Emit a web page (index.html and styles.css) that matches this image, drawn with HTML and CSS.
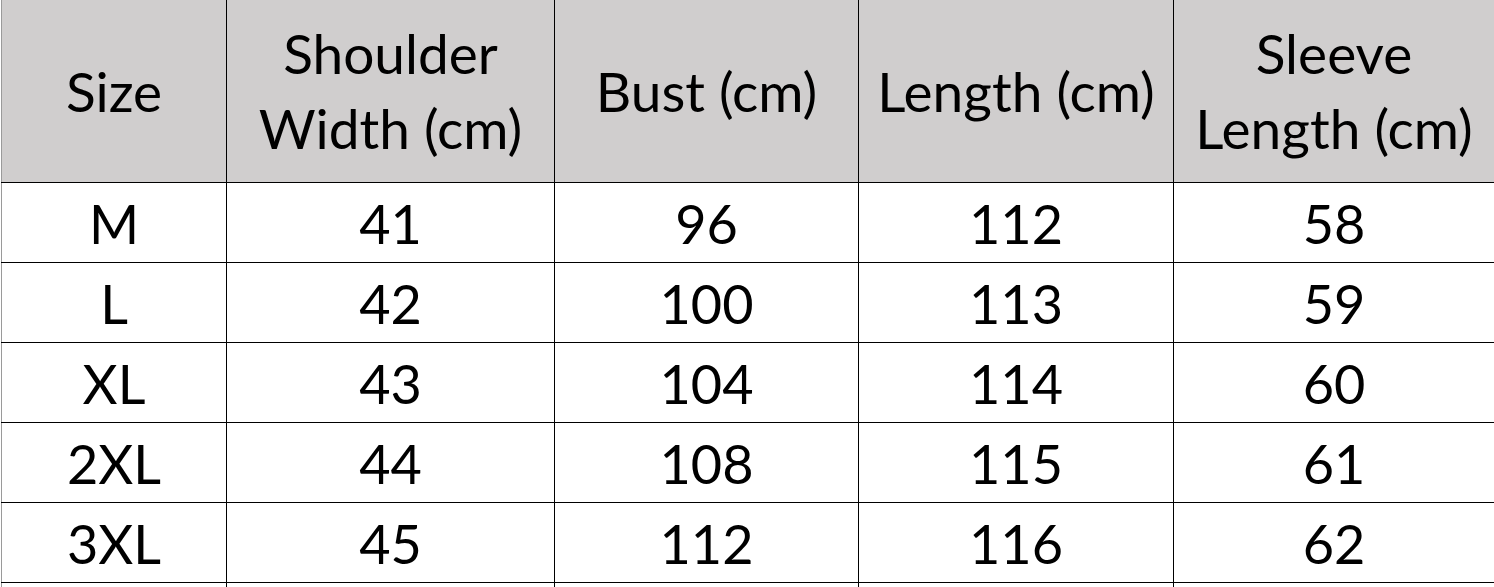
FILE: index.html
```html
<!DOCTYPE html>
<html>
<head>
<meta charset="utf-8">
<link rel="stylesheet" href="styles.css">
</head>
<body>
<table class="size-table">
  <colgroup>
    <col class="c1"><col class="c2"><col class="c3"><col class="c4"><col class="c5">
  </colgroup>
  <thead>
    <tr>
      <th>Size</th>
      <th>Shoulder<br>Width (cm)</th>
      <th>Bust (cm)</th>
      <th>Length (cm)</th>
      <th>Sleeve<br>Length (cm)</th>
    </tr>
  </thead>
  <tbody>
    <tr><td>M</td><td>41</td><td>96</td><td>112</td><td>58</td></tr>
    <tr><td>L</td><td>42</td><td>100</td><td>113</td><td>59</td></tr>
    <tr><td>XL</td><td>43</td><td>104</td><td>114</td><td>60</td></tr>
    <tr><td>2XL</td><td>44</td><td>108</td><td>115</td><td>61</td></tr>
    <tr><td>3XL</td><td>45</td><td>112</td><td>116</td><td>62</td></tr>
    <tr class="extra"><td></td><td></td><td></td><td></td><td></td></tr>
  </tbody>
</table>
</body>
</html>
```
FILE: styles.css
```css
html, body {
  margin: 0;
  padding: 0;
  background: #ffffff;
  overflow: hidden;
}
.size-table {
  border-collapse: collapse;
  table-layout: fixed;
  width: 1494px;
  margin-left: 1px;
  font-family: Lato, "Open Sans", sans-serif;
  font-size: 54px;
  color: #000;
}
.c1 { width: 225px; }
.c2 { width: 328px; }
.c3 { width: 304px; }
.c4 { width: 315px; }
.c5 { width: 321px; }
.size-table th, .size-table td {
  border: 1.5px solid #000;
  text-align: center;
  vertical-align: middle;
  padding: 0;
  font-weight: normal;
}
.size-table thead th {
  background: #d0cece;
  height: 182px;
  line-height: 75px;
  font-size: 55px;
  border-top: none;
}
.size-table th:first-child, .size-table td:first-child {
  border-left: 1px solid #9a9a9a;
}
.size-table tbody td {
  height: 76px;
  line-height: 60px;
  padding-top: 3px;
}
.size-table tr.extra td {
  height: 40px;
}
```
